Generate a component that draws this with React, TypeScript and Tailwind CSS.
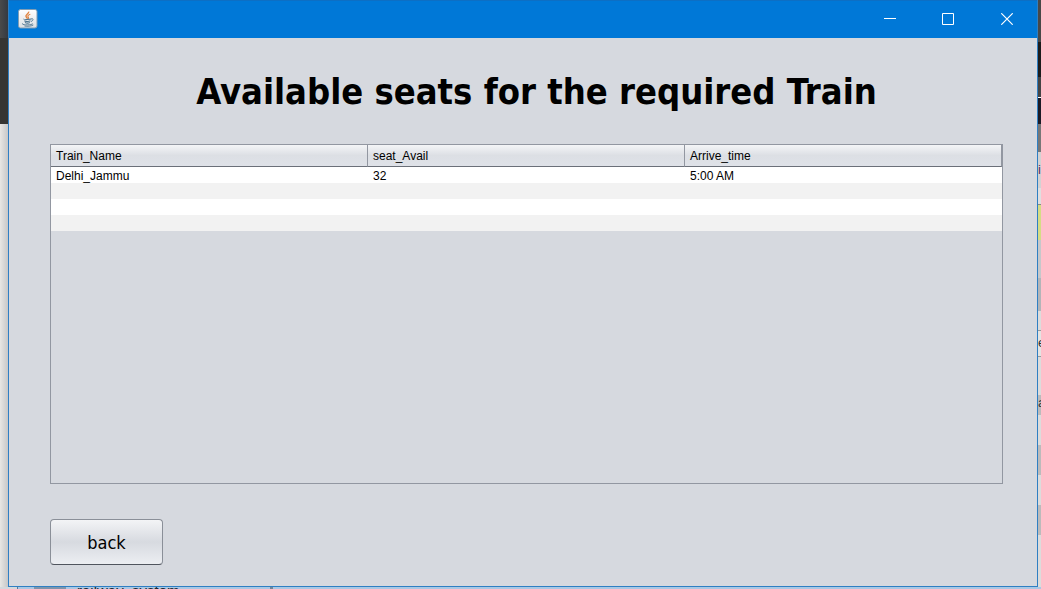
import React from "react";

const columns = ["Train_Name", "seat_Avail", "Arrive_time"];

const rows: string[][] = [
  ["Delhi_Jammu", "32", "5:00 AM"],
  ["", "", ""],
  ["", "", ""],
  ["", "", ""],
];

function JavaIcon() {
  return (
    <svg width="20" height="20" viewBox="0 0 20 20" fill="none" aria-hidden="true">
      <defs>
        <linearGradient id="tile" x1="0" y1="0" x2="0" y2="1">
          <stop offset="0" stopColor="#ffffff" />
          <stop offset="1" stopColor="#dcdfe2" />
        </linearGradient>
      </defs>
      <rect x="0.5" y="0.5" width="18.5" height="18.5" rx="2" fill="url(#tile)" stroke="#7f9db5" />
      <path d="M10.6 2.6c1 1.8-3.4 3-2.6 4.900.3.800 1.200 1.300 1.500 2.200" stroke="#e08340" strokeWidth="1.4" />
      <path d="M12.300 5.300c-2.300.900-3 1.800-2.100 2.800.600.700.300 1.200-.300 1.700" stroke="#e08340" strokeWidth="1.100" />
      <path d="M6 9.800c-1 .900 6.500.900 7.500 0M6.300 11.700c1.500.800 4.800.800 6.200.100M7 13.500c1.300.600 3.600.600 4.800 0" stroke="#4f7590" strokeWidth="1.100" />
      <path d="M13.300 9.700c2.500-.500 2.300 2-.300 2.800M4.500 14.400c-1.800 1.900 8.700 2 10.300.300M6.500 17c3 .500 6.800.200 8.800-1" stroke="#4f7590" strokeWidth="0.900" />
    </svg>
  );
}

function TitleBar() {
  return (
    <header className="flex h-[38px] shrink-0 items-center justify-between border-t border-[#0d6fc4] bg-[#0078d7] pb-[2px] pl-[9px]">
      <JavaIcon />
      <div className="flex h-full">
        <button type="button" aria-label="Minimize" className="flex w-[58px] items-center justify-center">
          <svg width="12" height="12" viewBox="0 0 12 12" stroke="#fff" fill="none">
            <path d="M0 5.500h12" />
          </svg>
        </button>
        <button type="button" aria-label="Maximize" className="flex w-[58px] items-center justify-center">
          <svg width="12" height="12" viewBox="0 0 12 12" stroke="#fff" fill="none">
            <path d="M.5.5h11v11H.5z" />
          </svg>
        </button>
        <button type="button" aria-label="Close" className="flex w-[60px] items-center justify-center">
          <svg width="12" height="12" viewBox="0 0 12 12" stroke="#fff" strokeWidth="1.200" fill="none">
            <path d="M.3.3l11.400 11.400M11.700.3L.3 11.700" />
          </svg>
        </button>
      </div>
    </header>
  );
}

function SeatTable() {
  return (
    <div className="min-h-0 flex-1 border border-[#9297a1]">
      <table className="w-full table-fixed border-separate border-spacing-0 text-left text-[12px] text-black">
        <thead>
          <tr>
            {columns.map((name) => (
              <th
                key={name}
                className="h-[22px] border-r border-b border-r-[#9297a1] border-b-[#6b7079] bg-linear-to-b from-[#f4f5f7] via-[#dcdfe4] to-[#dfe2e8] p-0 pl-[5px] leading-[20px] font-normal"
              >
                {name}
              </th>
            ))}
          </tr>
        </thead>
        <tbody>
          {rows.map((row, i) => (
            <tr key={i} className="odd:bg-white even:bg-[#f2f2f2]">
              {row.map((cell, j) => (
                <td key={j} className="h-4 p-0 pt-[2px] pl-[5px] leading-[14px]">
                  {cell}
                </td>
              ))}
            </tr>
          ))}
        </tbody>
      </table>
    </div>
  );
}

function RightBackdrop() {
  return (
    <div className="flex w-[3px] shrink-0 flex-col overflow-hidden bg-[#dcdcdb] text-[13px] leading-4 text-[#333]" aria-hidden="true">
      <div className="h-[42px] bg-[#484848]" />
      <div className="h-[35px] bg-[#1c1c1c]" />
      <div className="h-[20px] bg-[#444]" />
      <div className="h-px bg-white" />
      <div className="h-[26px] bg-[#1b1b26]" />
      <div className="h-[28px] bg-[#777]" />
      <div className="h-[36px] bg-[#d2d2d2] pt-[10px] text-[#603060]">i</div>
      <div className="h-[16px] bg-[#dfdfdf]" />
      <div className="h-[36px] border-t border-[#888] bg-[#d5dc84]" />
      <div className="h-[38px] bg-[#c5c8ca]" />
      <div className="h-[33px] bg-[#b2b5b8]" />
      <div className="h-[19px]" />
      <div className="h-[27px] border-y border-[#999] bg-[#e4e4e2] pt-1">e</div>
      <div className="h-[38px]" />
      <div className="h-[20px] bg-[#bbb]">a</div>
      <div className="h-[30px]" />
      <div className="h-[30px] bg-[#bbb]" />
      <div className="h-[30px]" />
      <div className="h-[30px] bg-[#bbb]" />
    </div>
  );
}

export default function App() {
  return (
    <div className="flex h-screen flex-col overflow-hidden bg-[#a9c8e4] font-['Liberation_Sans',Arial,sans-serif]">
      <div className="flex min-h-0 flex-1">
        <div className="flex w-2 shrink-0 flex-col" aria-hidden="true">
          <div className="h-[38px] bg-linear-to-r from-[#4a4a4a] to-[#343a42]" />
          <div className="h-[86px] bg-[#353533]" />
          <div className="flex-1 bg-linear-to-r from-[#e8e7e4] to-[#c6c7c8]" />
        </div>
        <div className="flex min-w-0 flex-1 flex-col border-x border-b border-[#2f7fc3] bg-[#d6d9df]">
          <TitleBar />
          <main className="flex min-h-0 flex-1 flex-col pr-[34px] pb-[21px] pl-[41px]">
            <h1 className="pt-[30px] pb-7 pl-5 text-center font-['DejaVu_Sans_Condensed','Noto_Sans',sans-serif] text-[36px] leading-[48px] font-bold whitespace-nowrap text-black">
              Available seats for the required Train
            </h1>
            <SeatTable />
            <button
              type="button"
              className="mt-[35px] h-[46px] w-[113px] shrink-0 rounded-[4px] border border-[#8a8f98] border-b-[#50555e] bg-linear-to-b from-[#f3f4f6] via-[#d7dae0] to-[#eceef2] font-['DejaVu_Sans_Condensed','Noto_Sans',sans-serif] text-[18px] text-black"
            >
              back
            </button>
          </main>
        </div>
        <RightBackdrop />
      </div>
      <div className="flex h-[2px] shrink-0 overflow-hidden" aria-hidden="true">
        <div className="w-[17px] bg-[#d4d8dc]" />
        <div className="w-[60px] border-l border-[#56799a] pl-4">
          <div className="h-full w-8 bg-[#7d95ac]" />
        </div>
        <div className="-mt-[3px] w-[193px] text-[15px] leading-[14px] text-[#1b2733]">railway_system</div>
        <div className="w-[3px] bg-[#71869a]" />
        <div className="flex-1" />
      </div>
    </div>
  );
}
